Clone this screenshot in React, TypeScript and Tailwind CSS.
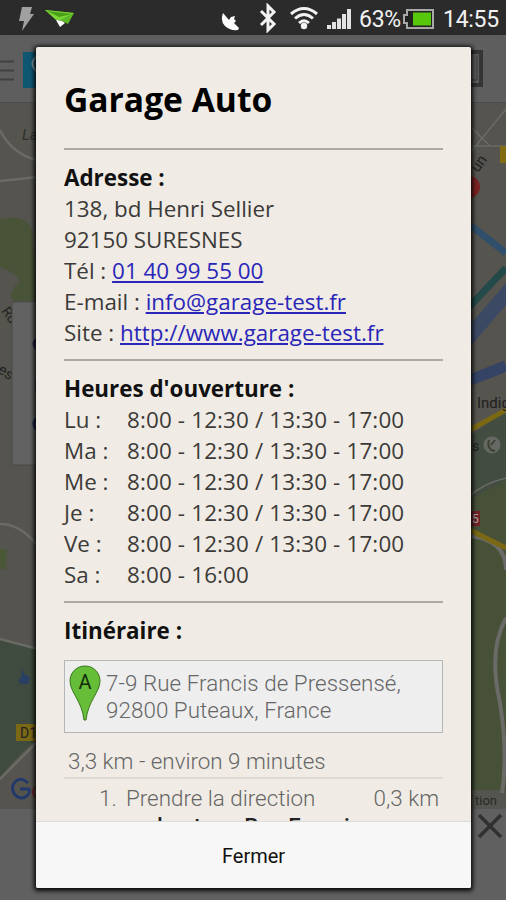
import React from 'react'

const hours = [
  { day: 'Lu :', time: '8:00 - 12:30 / 13:30 - 17:00' },
  { day: 'Ma :', time: '8:00 - 12:30 / 13:30 - 17:00' },
  { day: 'Me :', time: '8:00 - 12:30 / 13:30 - 17:00' },
  { day: 'Je :', time: '8:00 - 12:30 / 13:30 - 17:00' },
  { day: 'Ve :', time: '8:00 - 12:30 / 13:30 - 17:00' },
  { day: 'Sa :', time: '8:00 - 16:00' },
]

const StatusBar: React.FC = () => (
  <div className="flex h-[35px] items-center bg-[#2b2b2b] text-[#f2f2f2] font-['Roboto',sans-serif]">
    <svg className="ml-[18px] shrink-0" width="16" height="28" viewBox="0 0 16 28">
      <path d="M4 3h10l-2 7h4L4 27l2-10H1z" fill="#a0a0a0" />
    </svg>
    <svg className="ml-[11px] shrink-0" width="31" height="20" viewBox="0 0 31 20">
      <path d="M0 2l29 3-6 11-6-3-5-1z" fill="#5cb824" />
      <path d="M0 2l29 3-16 8-2-1z" fill="#7bd536" />
      <path d="M2 3l25 3-13 3z" fill="#489f18" />
      <path d="M11 12l6 1 3 2-5 4z" fill="#fff" />
    </svg>
    <svg className="ml-[145px] mt-[8px] shrink-0" width="19" height="19" viewBox="0 0 19 19" fill="#fff">
      <path d="M2 1Q-1 9 4 14q5 5 13 4l1-2-5-5 2-2-2-2 1-3-4 1-2 3z" />
    </svg>
    <svg className="ml-[19px] shrink-0" width="18" height="30" viewBox="0 0 18 30" fill="none" stroke="#f2f2f2" strokeWidth="3">
      <path d="M2 8l13 13-6 6V3l6 6L2 22" />
    </svg>
    <svg className="ml-[13px] shrink-0" width="28" height="24" viewBox="0 0 28 24" fill="none" stroke="#f2f2f2" strokeWidth="3">
      <path d="M1 8q13-11 26 0M5 12.500q9-8 18 0M9 17q5-4.500 10 0" />
      <circle cx="14" cy="20" r="3.200" fill="#f2f2f2" stroke="none" />
    </svg>
    <svg className="ml-[9px] mt-[3px] shrink-0" width="25" height="20" viewBox="0 0 25 20" fill="#e2e2e2">
      <path d="M0 16h4v4H0zM5 13h4v7H5zM10 9.500h4V20h-4zM15 5h4v15h-4zM20 0h4v20h-4z" />
    </svg>
    <span className="ml-[7px] mt-[3px] w-[43px] whitespace-nowrap text-[23px] leading-none tracking-[-0.3px]">63%</span>
    <svg className="ml-[1px] mt-[3px] shrink-0" width="32" height="20" viewBox="0 0 32 20">
      <path d="M1 6h3V1h26v18H4v-5H1z" fill="#222" stroke="#a8a8a8" strokeWidth="2" />
      <path d="M10 3.500h18v13H10z" fill="#57c70b" />
    </svg>
    <span className="ml-[8px] mt-[3px] whitespace-nowrap text-[23px] leading-none tracking-[-0.3px]">14:55</span>
  </div>
)

const AppHeader: React.FC = () => (
  <div className="flex h-[68px] items-start border-b border-[#4b4b4b] bg-[#5e5e5e] shadow-md">
    <svg width="40" height="60" viewBox="0 0 40 60">
      <path d="M0 26.500h14M0 35.500h14M0 44.500h14" stroke="#404040" strokeWidth="2" />
      <path d="M23 17h17v36H23z" fill="#0f5672" />
      <path d="M37 21q-9 7 0 16" fill="none" stroke="#7f8f96" strokeWidth="2" />
    </svg>
    <svg className="ml-auto mr-[21px]" width="20" height="60" viewBox="0 0 20 60" fill="none" stroke="#353535">
      <path d="M0 17h16v33H0" strokeWidth="4" />
      <path d="M12 20v25H0" strokeWidth="1.500" stroke="#444" />
    </svg>
  </div>
)

const MapBackground: React.FC = () => (
  <svg width="506" height="706" viewBox="0 103 506 706" className="block font-['Roboto',sans-serif]">
    <rect y="103" width="506" height="706" fill="#55544e" />
    <path d="M0 219q28-5 32 12l5 70H13q-6-8 7-20-5-9-20-14z" fill="#485337" />
    <path d="M0 639q20 2 38 11v89Q16 756 0 778z" fill="#3e4b3e" />
    <path d="M0 549h7l-1 20H0z" fill="#4b5837" />
    <path d="M470 436l36-26v95h-36z" fill="#424c40" />
    <path d="M470 500l36-20v310h-36z" fill="#465138" />
    <path d="M470 790h36v19h-36z" fill="#55554f" />
    <g fill="none" stroke="#6a6a66" strokeWidth="2.500">
      <path d="M0 130q12 24 37 30M0 181l38-4M0 524q20 0 36 20M0 639l38 10M0 779l38-38" />
      <path d="M470 153l36-44M470 126l20 20M470 146h36M470 496q12-12 36-18M470 374l36-8" strokeWidth="1.500" />
      <path d="M470 536q36 4 36 34M506 618q-18 32-6 85 8 50 2 90" strokeWidth="4" />
    </g>
    <path d="M470 225l36 28" stroke="#314e6b" strokeWidth="7" />
    <path d="M470 325l36-42v22l-36 42z" fill="#3c4965" />
    <path d="M470 306l36-38" stroke="#234a49" strokeWidth="7" />
    <path d="M470 380l36-14" stroke="#354465" strokeWidth="11" />
    <path d="M470 430l36-20M470 530l36 18" stroke="#7b6815" strokeWidth="5" />
    <circle cx="469" cy="187" r="11" fill="#7b2222" />
    <rect x="500" y="146" width="6" height="17" fill="#826c12" />
    <rect x="470" y="511" width="10" height="15" fill="#702326" />
    <text x="472" y="523" fontSize="12" fill="#aaa">5</text>
    <text x="22" y="140" fontSize="15" fill="#30302d" fontStyle="italic">La</text>
    <text x="1" y="311" fontSize="14" fill="#222" transform="rotate(55 1 311)">Rue</text>
    <text x="-4" y="374" fontSize="15" fill="#222" transform="rotate(35 0 374)">es</text>
    <text x="478" y="173" fontSize="15" fill="#222" transform="rotate(-55 478 173)">un</text>
    <text x="477" y="408" fontSize="15" fill="#202020">Indig</text>
    <text x="472" y="451" fontSize="14" fill="#202020">s</text>
    <circle cx="492" cy="445" r="8.500" fill="#666963" />
    <path d="M489 440q-2 6 2 10l4 1M495 440l-4 5" fill="none" stroke="#3b4234" strokeWidth="2" />
    <path d="M12 302h26v163H12z" fill="#626262" stroke="#484848" />
    <path d="M37 339q-6 5 0 10M37 380v11M37 418q-6 6 0 12" fill="none" stroke="#1b2445" strokeWidth="3" />
    <path d="M22 668l2 6 3 2 3 1-2 7h-7l-3-4 3-2z" fill="#293f65" />
    <rect x="16" y="724" width="28" height="17" fill="#7b6815" />
    <text x="20" y="738" fontSize="14" fill="#222">D1</text>
    <path d="M28 783q-7-7-13-1-5 6 0 13 7 6 13 0 2-3 1-6h-9" fill="none" stroke="#23396c" strokeWidth="3" />
    <circle cx="38" cy="792" r="5" fill="none" stroke="#662a2a" strokeWidth="2.500" />
    <text x="475" y="805" fontSize="13" fill="#292929">tion</text>
  </svg>
)

const GarageDialog: React.FC = () => (
  <div className="absolute left-[36px] top-[47px] flex h-[841px] w-[435px] flex-col overflow-hidden rounded-[2px] bg-[#f0ece5] shadow-[0_1px_4px_2px_rgba(0,0,0,0.9)]">
    <div className="h-[774px] overflow-hidden px-7 text-[22.4px] leading-[31px] text-[#3c3a38] font-['Open_Sans',sans-serif]">
      <h1 className="mt-[30px] h-[71px] text-[33.6px] leading-[44px] font-bold text-black">Garage Auto</h1>
      <hr className="border-t-2 border-[#aeaba7]" />
      <section className="mt-[12px] h-[197px]">
        <h2 className="font-bold text-[#111]">Adresse :</h2>
        <p>138, bd Henri Sellier</p>
        <p>92150 SURESNES</p>
        <p>Tél : <a href="#tel" className="text-[#2a26b8] underline">01 40 99 55 00</a></p>
        <p>E-mail : <a href="#mail" className="text-[#2a26b8] underline">info@garage-test.fr</a></p>
        <p>Site : <a href="#site" className="text-[#2a26b8] underline">http://www.garage-test.fr</a></p>
      </section>
      <hr className="border-t-2 border-[#aeaba7]" />
      <section className="mt-[12px] h-[228px]">
        <h2 className="font-bold text-[#111]">Heures d'ouverture :</h2>
        {hours.map((h) => (
          <div key={h.day} className="flex">
            <span className="w-[63px]">{h.day}</span>
            <span className="whitespace-nowrap tracking-[0.15px]">{h.time}</span>
          </div>
        ))}
      </section>
      <hr className="border-t-2 border-[#aeaba7]" />
      <h2 className="mt-[12px] font-bold text-[#111]">Itinéraire :</h2>
      <div className="font-['Roboto',sans-serif] font-light text-[#666]">
        <div className="mt-[14px] flex h-[73px] border border-[#b4b7b6] bg-[#eee] pl-[4px] pt-[9px] leading-[27px]">
          <svg className="-mt-[5px] mr-[5px] shrink-0" width="32" height="58" viewBox="0 0 32 58">
            <path d="M16 1C7 1 1 8 1 16c0 11 12 20 14 39h2c2-19 14-28 14-39C31 8 25 1 16 1z" fill="#65bd38" stroke="#39751f" />
            <text x="16" y="24" textAnchor="middle" fontSize="20" fill="#122d08" fontWeight="400">A</text>
          </svg>
          <p className="whitespace-nowrap tracking-[0.05px]">7-9 Rue Francis de Pressensé,<br />92800 Puteaux, France</p>
        </div>
        <p className="mt-[13px] h-[33px] border-b-2 border-[#dcd8d2] pl-1">3,3 km - environ 9 minutes</p>
        <div className="mt-[6px] flex pl-[35px] pr-1 leading-[27px]">
          <span className="w-[27px] shrink-0">1.</span>
          <div className="flex-1 whitespace-nowrap">
            <div className="flex justify-between">
              <span>Prendre la direction</span>
              <span>0,3 km</span>
            </div>
            <p className="mt-px font-medium text-[#222]">sud-est sur Rue Francis</p>
          </div>
        </div>
      </div>
    </div>
    <button className="flex-1 border-t border-[#dedcd9] bg-[#f7f7f7] pt-[2px] text-[20px] text-[#111] font-['Roboto',sans-serif]">Fermer</button>
  </div>
)

const App: React.FC = () => {
  return (
    <div className="relative flex h-[900px] w-[506px] flex-col overflow-hidden bg-[#606060]">
      <StatusBar />
      <AppHeader />
      <MapBackground />
      <div className="flex flex-1 justify-end">
        <svg className="mr-[3px] mt-[4px]" width="26" height="26" viewBox="0 0 26 26">
          <path d="M2 2l22 22M24 2L2 24" stroke="#303030" strokeWidth="3.500" />
        </svg>
      </div>
      <GarageDialog />
    </div>
  )
}

export default App
